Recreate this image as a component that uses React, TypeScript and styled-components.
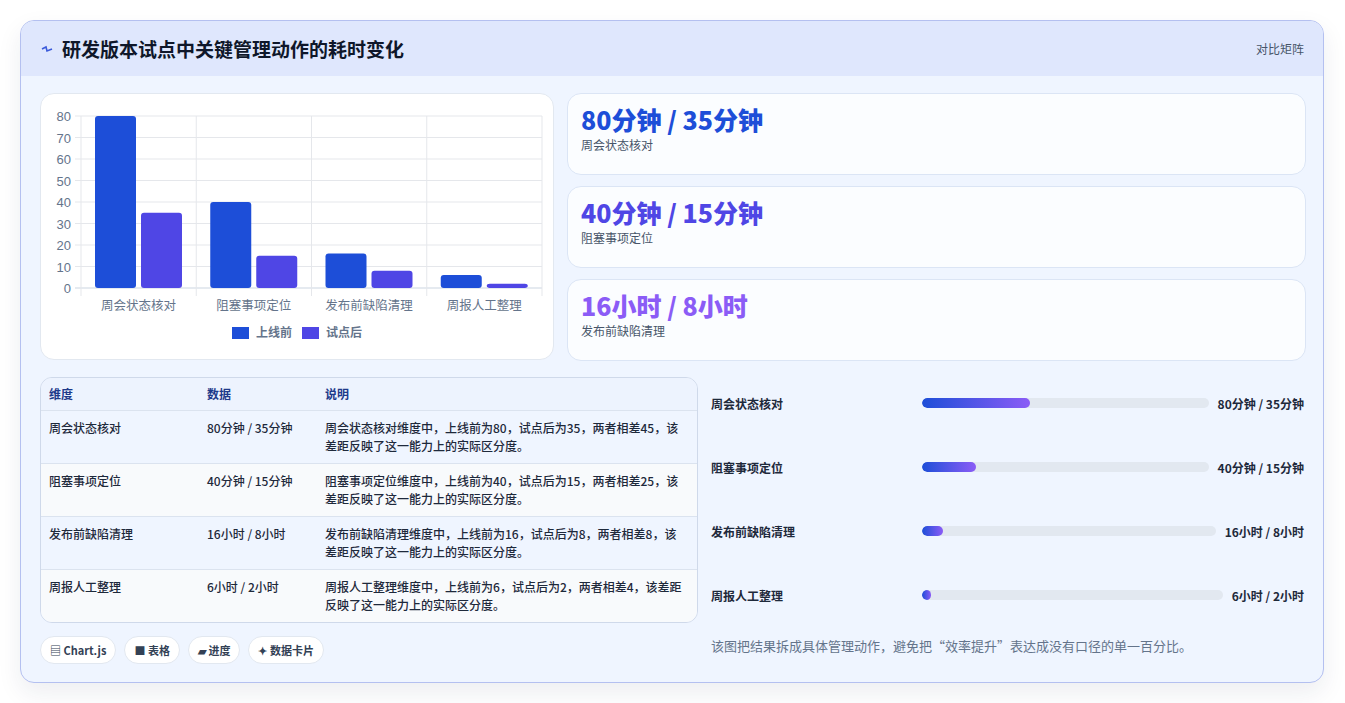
import React from "react";
import styled, { createGlobalStyle } from "styled-components";

const Global = createGlobalStyle`
  body { margin: 0; background: #ffffff; font-family: "Noto Sans CJK SC", "Noto Sans", sans-serif; }
`;

const Page = styled.div`
  padding: 20px 20px 20px 20px;
`;

const Card = styled.div`
  width: 1302px;
  height: 661px;
  border: 1px solid #b4c0f0;
  border-radius: 14px;
  background: #eff5ff;
  overflow: hidden;
  box-shadow: 0 10px 24px rgba(30, 41, 80, 0.08);
  display: flex;
  flex-direction: column;
`;

const Header = styled.div`
  height: 55px;
  background: #dfe7fd;
  display: flex;
  align-items: center;
  justify-content: space-between;
  padding: 0 19px 0 20px;
`;

const Title = styled.h1`
  margin: 0;
  font-size: 19px;
  font-weight: 700;
  color: #0f172a;
  display: flex;
  align-items: center;
  gap: 9px;
`;

const Tag = styled.span`
  font-size: 12px;
  color: #475569;
`;

const Body = styled.div`
  padding: 17px 19px 0 19px;
  display: flex;
  flex-direction: column;
`;

const TopRow = styled.div`
  display: grid;
  grid-template-columns: 514px 739px;
  gap: 13px;
`;

const ChartBox = styled.div`
  background: #fff;
  border: 1px solid #e2e8f0;
  border-radius: 14px;
  height: 267px;
  box-sizing: border-box;
`;

const Metrics = styled.div`
  display: flex;
  flex-direction: column;
  gap: 11px;
`;

const Metric = styled.div`
  height: 82px;
  box-sizing: border-box;
  background: #fbfdff;
  border: 1px solid #dbe5f5;
  border-radius: 14px;
  padding: 7px 13px;
`;

const MetricValue = styled.div<{ $c: string }>`
  font-size: 25px;
  font-weight: 800;
  color: ${(p) => p.$c};
  line-height: 36px;
`;

const MetricLabel = styled.div`
  font-size: 12px;
  color: #475569;
  margin-top: -1px;
`;

const BottomRow = styled.div`
  display: grid;
  grid-template-columns: 658px 1fr;
  gap: 13px;
  margin-top: 16px;
`;

const Table = styled.div`
  border: 1px solid #cfd9ea;
  border-radius: 12px;
  overflow: hidden;
  font-size: 12px;
  color: #1e293b;
`;

const TRow = styled.div<{ $head?: boolean; $alt?: boolean }>`
  display: grid;
  grid-template-columns: 158px 118px 1fr;
  padding: ${(p) => (p.$head ? "7px 8px" : "8px 8px 9px")};
  background: ${(p) => (p.$head ? "#edf3fe" : p.$alt ? "#f8fafc" : "#eff5ff")};
  border-top: ${(p) => (p.$head ? "none" : "1px solid #dbe3ef")};
  color: ${(p) => (p.$head ? "#1e3a8a" : "#1e293b")};
  font-weight: ${(p) => (p.$head ? 600 : 500)};
  line-height: 18px;
  height: ${(p) => (p.$head ? "auto" : "35px")};
  & > span:last-child { padding-right: 2px; }
`;

const Chips = styled.div`
  display: flex;
  gap: 8px;
  margin-top: 13px;
`;

const Chip = styled.span`
  background: #fff;
  border: 1px solid #e2e8f0;
  border-radius: 14px;
  padding: 5px 9px;
  font-size: 11px;
  font-weight: 600;
  color: #334155;
`;

const Progress = styled.div`
  display: flex;
  flex-direction: column;
`;

const PRow = styled.div`
  display: flex;
  align-items: center;
  height: 64px;
  font-size: 12px;
  font-weight: 600;
  color: #1e293b;
  gap: 9px;
  &:first-child { margin-top: -6px; }
`;

const PLabel = styled.span`
  width: 202px;
  flex: none;
`;

const Track = styled.div`
  flex: 1;
  height: 10px;
  border-radius: 5px;
  background: #e2e8f0;
  overflow: hidden;
`;

const Fill = styled.div`
  height: 100%;
  border-radius: 5px;
  background: linear-gradient(90deg, #1d4ed8, #8b5cf6);
`;

const Note = styled.p`
  margin: 9px 0 0;
  font-size: 13px;
  color: #64748b;
`;

const rows = [
  { k: "周会状态核对", v: "80分钟 / 35分钟", a: 80, b: 35, d: 45, p: 37.6, c: "#1d4ed8" },
  { k: "阻塞事项定位", v: "40分钟 / 15分钟", a: 40, b: 15, d: 25, p: 19, c: "#4f46e5" },
  { k: "发布前缺陷清理", v: "16小时 / 8小时", a: 16, b: 8, d: 8, p: 7.2, c: "#8b5cf6" },
  { k: "周报人工整理", v: "6小时 / 2小时", a: 6, b: 2, d: 4, p: 3, c: "" },
];

function Chart() {
  const x0 = 40, y0 = 194, top = 22, w = 461;
  const sc = (y0 - top) / 80;
  const cw = w / 4;
  return (
    <svg width="512" height="265" style={{ display: "block" }}>
      {[0, 10, 20, 30, 40, 50, 60, 70, 80].map((t) => (
        <g key={t}>
          <line x1={x0 - 6} x2={x0 + w} y1={y0 - t * sc} y2={y0 - t * sc} stroke={t === 0 ? "#cbd5e1" : "#e5e7eb"} />
          <text x={x0 - 10} y={y0 - t * sc + 5} fontSize="13" fill="#64748b" textAnchor="end" fontFamily="Liberation Sans, sans-serif">{t}</text>
        </g>
      ))}
      {[0, 1, 2, 3, 4].map((i) => (
        <line key={i} x1={x0 + i * cw} x2={x0 + i * cw} y1={top} y2={y0 + 8} stroke="#e5e7eb" />
      ))}
      {rows.map((r, i) => {
        const cx = x0 + i * cw;
        return (
          <g key={r.k}>
            <rect x={cx + 14} y={y0 - r.a * sc} width={41} height={r.a * sc} rx="3" fill="#1d4ed8" />
            <rect x={cx + 60} y={y0 - r.b * sc} width={41} height={r.b * sc} rx="3" fill="#4f46e5" />
            <text x={cx + cw / 2} y={y0 + 22} fontSize="12.5" fill="#64748b" textAnchor="middle">{r.k}</text>
          </g>
        );
      })}
      <rect x="191" y="233" width="17" height="12" fill="#1d4ed8" />
      <text x="215" y="243" fontSize="12" fontWeight="600" fill="#64748b">上线前</text>
      <rect x="261" y="233" width="17" height="12" fill="#4f46e5" />
      <text x="285" y="243" fontSize="12" fontWeight="600" fill="#64748b">试点后</text>
    </svg>
  );
}

export default function App() {
  return (
    <Page>
      <Global />
      <Card>
        <Header>
          <Title>
            <svg width="12" height="10" viewBox="0 0 12 10">
              <path d="M1 5 L5 3 L6 7 L11 5" stroke="#3b5bdb" strokeWidth="1.6" fill="none" />
            </svg>
            研发版本试点中关键管理动作的耗时变化
          </Title>
          <Tag>对比矩阵</Tag>
        </Header>
        <Body>
          <TopRow>
            <ChartBox><Chart /></ChartBox>
            <Metrics>
              {rows.slice(0, 3).map((r) => (
                <Metric key={r.k}>
                  <MetricValue $c={r.c}>{r.v}</MetricValue>
                  <MetricLabel>{r.k}</MetricLabel>
                </Metric>
              ))}
            </Metrics>
          </TopRow>
          <BottomRow>
            <div>
              <Table>
                <TRow $head><span>维度</span><span>数据</span><span>说明</span></TRow>
                {rows.map((r, i) => (
                  <TRow key={r.k} $alt={i % 2 === 1}>
                    <span>{r.k}</span>
                    <span>{r.v}</span>
                    <span>{r.k}维度中，上线前为{r.a}，试点后为{r.b}，两者相差{r.d}，该差距反映了这一能力上的实际区分度。</span>
                  </TRow>
                ))}
              </Table>
              <Chips>
                <Chip>▤ Chart.js</Chip>
                <Chip>■ 表格</Chip>
                <Chip>▰ 进度</Chip>
                <Chip>✦ 数据卡片</Chip>
              </Chips>
            </div>
            <Progress>
              {rows.map((r) => (
                <PRow key={r.k}>
                  <PLabel>{r.k}</PLabel>
                  <Track><Fill style={{ width: `${r.p}%` }} /></Track>
                  <span>{r.v}</span>
                </PRow>
              ))}
              <Note>该图把结果拆成具体管理动作，避免把“效率提升”表达成没有口径的单一百分比。</Note>
            </Progress>
          </BottomRow>
        </Body>
      </Card>
    </Page>
  );
}
